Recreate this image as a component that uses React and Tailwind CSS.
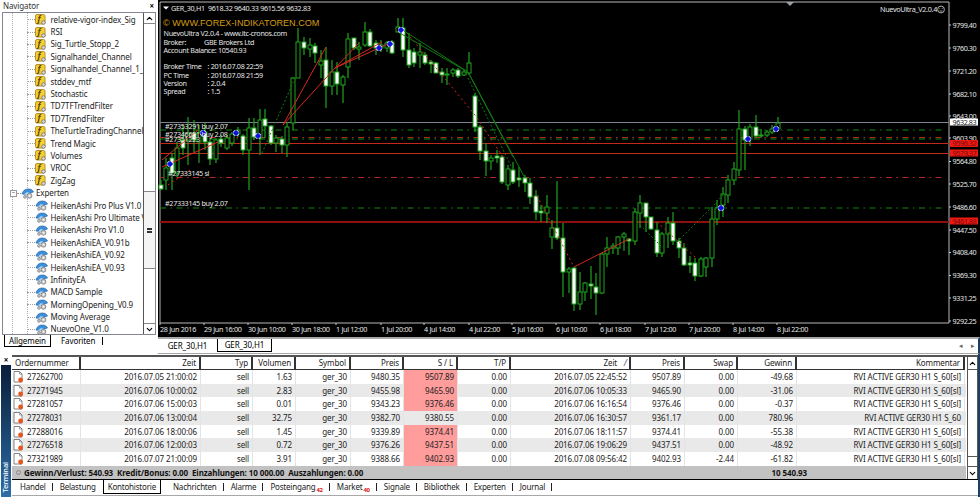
import React from 'react';
import { ChevronUp, ChevronDown } from 'lucide-react';

// x, high, low, bodyTop, bodyBottom, white body?
const candles = [
  [161, 180, 190, 185, 189, 1], [166, 158, 190, 168, 180, 0], [172, 153, 190, 158, 173, 1], [177, 142, 177, 148, 173, 0],
  [183, 125, 155, 140, 148, 1], [188, 117, 165, 133, 140, 0], [194, 120, 152, 133, 140, 1], [199, 125, 163, 133, 142, 0],
  [205, 123, 150, 132, 142, 1], [210, 138, 165, 142, 159, 1], [216, 138, 163, 140, 159, 0], [221, 135, 147, 139, 143, 1],
  [227, 135, 150, 138, 148, 0], [232, 132, 146, 134, 143, 0], [238, 127, 137, 130, 134, 0], [243, 134, 155, 136, 150, 1],
  [249, 118, 190, 128, 150, 0], [254, 118, 140, 128, 137, 1], [260, 109, 155, 120, 138, 0], [265, 109, 138, 119, 126, 1],
  [271, 125, 145, 126, 143, 1], [276, 135, 152, 138, 143, 0], [282, 136, 153, 139, 145, 1], [287, 122, 157, 127, 145, 0],
  [293, 77, 130, 78, 123, 0], [298, 28, 78, 42, 78, 0], [304, 37, 55, 42, 48, 1], [310, 38, 57, 45, 49, 0],
  [315, 43, 63, 46, 53, 1], [321, 50, 78, 61, 65, 0], [326, 47, 108, 60, 86, 1], [332, 60, 95, 72, 86, 0],
  [337, 62, 95, 72, 84, 1], [343, 75, 103, 77, 85, 0], [348, 33, 78, 39, 67, 0], [354, 38, 50, 38, 48, 1],
  [359, 42, 60, 47, 49, 0], [365, 22, 47, 32, 45, 0], [370, 29, 47, 32, 46, 1], [376, 40, 55, 43, 48, 1],
  [381, 40, 52, 45, 48, 0], [387, 41, 52, 43, 48, 0], [392, 40, 54, 42, 53, 1], [398, 18, 32, 27, 32, 0],
  [403, 18, 57, 28, 50, 1], [409, 33, 68, 50, 65, 1], [414, 48, 67, 52, 63, 1], [420, 43, 68, 52, 55, 0],
  [425, 52, 65, 55, 63, 1], [431, 60, 73, 62, 64, 1], [436, 62, 73, 63, 73, 1], [442, 68, 83, 72, 75, 1],
  [447, 68, 85, 74, 75, 1], [453, 68, 77, 70, 73, 0], [458, 68, 78, 70, 76, 1], [464, 70, 76, 72, 75, 0],
  [469, 52, 75, 63, 73, 0], [475, 93, 132, 96, 127, 1], [480, 125, 160, 127, 151, 1], [486, 143, 176, 151, 161, 1],
  [491, 155, 170, 158, 161, 0], [497, 150, 163, 156, 158, 1], [502, 155, 184, 157, 182, 1], [508, 165, 190, 169, 185, 0],
  [513, 162, 184, 170, 182, 1], [519, 167, 187, 178, 180, 1], [525, 175, 192, 178, 183, 1], [530, 178, 204, 183, 197, 1],
  [536, 190, 220, 196, 212, 1], [541, 205, 222, 211, 213, 1], [547, 195, 223, 207, 213, 0], [552, 220, 249, 228, 237, 0],
  [557, 181, 240, 228, 238, 1], [563, 223, 297, 238, 272, 1], [569, 267, 293, 269, 272, 0], [574, 267, 311, 268, 304, 1],
  [580, 272, 310, 292, 304, 0], [585, 282, 301, 283, 292, 0], [591, 266, 299, 284, 286, 1], [596, 273, 315, 287, 293, 1],
  [602, 253, 294, 254, 293, 0], [607, 237, 267, 248, 254, 0], [613, 243, 254, 246, 248, 0], [618, 236, 255, 237, 248, 0],
  [624, 232, 251, 234, 237, 0], [629, 238, 255, 239, 241, 1], [635, 208, 245, 212, 241, 0], [640, 195, 228, 203, 213, 0],
  [646, 203, 232, 203, 217, 1], [651, 217, 230, 217, 229, 1], [657, 222, 257, 230, 253, 1], [662, 232, 257, 234, 253, 0],
  [668, 217, 248, 223, 234, 0], [673, 212, 245, 223, 241, 1], [679, 238, 258, 241, 248, 1], [684, 243, 266, 248, 265, 1],
  [690, 256, 273, 263, 265, 1], [695, 258, 281, 263, 276, 1], [701, 257, 277, 259, 276, 0], [706, 257, 277, 258, 267, 0],
  [712, 207, 267, 219, 258, 0], [717, 200, 225, 208, 219, 0], [723, 187, 217, 194, 205, 0], [728, 175, 203, 180, 195, 0],
  [734, 162, 185, 169, 180, 0], [739, 110, 176, 129, 170, 0], [745, 126, 170, 129, 140, 1], [750, 124, 146, 127, 139, 0],
  [756, 115, 138, 127, 136, 1], [761, 129, 138, 135, 136, 1], [767, 130, 137, 132, 135, 0], [772, 125, 134, 129, 132, 0],
  [778, 117, 131, 123, 129, 0],
];

const diamonds = [[170, 164], [203, 133], [236, 133], [258, 136], [379, 48], [390, 44], [401, 30], [721, 208], [748, 139], [776, 129]];

const dashdot = '6 4.5 1.5 4.5';

const times = [
  [160, '28 Jun 2016'], [204, '29 Jun 16:00'], [248, '30 Jun 10:00'], [292, '30 Jun 18:00'], [336, '1 Jul 12:00'],
  [381, '1 Jul 20:00'], [424, '4 Jul 14:00'], [469, '4 Jul 22:00'], [512, '5 Jul 16:00'], [556, '6 Jul 10:00'],
  [600, '6 Jul 18:00'], [645, '7 Jul 12:00'], [689, '7 Jul 20:00'], [733, '8 Jul 14:00'], [777, '8 Jul 22:00'],
];

const prices = [
  [25, '9799.40'], [48, '9760.30'], [71, '9721.20'], [94, '9682.10'], [116, '9643.00'], [138, '9603.90'], [161.5, '9564.80'],
  [184, '9525.70'], [207, '9486.60'], [230, '9447.50'], [252.5, '9408.40'], [275.5, '9369.30'], [298, '9331.25'], [321, '9292.25'],
];

const info = [
  [35.5, 'NuevoUltra  V2.0.4 - www.itc-cronos.com'],
  [44.5, 'Broker:'],
  [52.5, 'Account Balance: 10540.93'],
  [69, 'Broker Time'],
  [77.5, 'PC Time'],
  [85.5, 'Version'],
  [94, 'Spread'],
];

const infoValues = [
  [44.5, 204, 'GBE Brokers Ltd'],
  [69, 207.5, ': 2016.07.08 22:59'],
  [77.5, 207.5, ': 2016.07.08 21:59'],
  [85.5, 207.5, ': 2.0.4'],
  [94, 207.5, ': 1.5'],
];

const indicators = [
  'relative-vigor-index_Sig', 'RSI', 'Sig_Turtle_Stopp_2', 'Signalhandel_Channel', 'Signalhandel_Channel_1_',
  'stddev_mtf', 'Stochastic', 'TD7TFTrendFilter', 'TD7TrendFilter', 'TheTurtleTradingChannel', 'Trend Magic',
  'Volumes', 'VROC', 'ZigZag',
];

const experts = [
  'HeikenAshi Pro Plus V1.0', 'HeikenAshi Pro Ultimate V', 'HeikenAshi Pro V1.0', 'HeikenAshiEA_V0.91b',
  'HeikenAshiEA_V0.92', 'HeikenAshiEA_V0.93', 'InfinityEA', 'MACD Sample', 'MorningOpening_V0.9',
  'Moving Average', 'NuevoOne_V1.0',
];

const columns = [
  { label: 'Ordernummer', w: 'w-[69px]', align: 'text-left pl-[3px]' },
  { label: 'Zeit', w: 'w-[120px]', align: 'text-right' },
  { label: 'Typ', w: 'w-[52px]', align: 'text-right' },
  { label: 'Volumen', w: 'w-[43px]', align: 'text-right' },
  { label: 'Symbol', w: 'w-[55px]', align: 'text-right' },
  { label: 'Preis', w: 'w-[53px]', align: 'text-right' },
  { label: 'S / L', w: 'w-[54px]', align: 'text-right' },
  { label: 'T/P', w: 'w-[53px]', align: 'text-right' },
  { label: 'Zeit    ⁄', w: 'w-[120px]', align: 'text-right' },
  { label: 'Preis', w: 'w-[54px]', align: 'text-right' },
  { label: 'Swap', w: 'w-[53px]', align: 'text-right' },
  { label: 'Gewinn', w: 'w-[59px]', align: 'text-right' },
  { label: 'Kommentar', w: 'w-[168px]', align: 'text-right' },
];

const rows = [
  ['27262700', '2016.07.05 21:00:02', 'sell', '1.63', 'ger_30', '9480.35', '9507.89', '0.00', '2016.07.05 22:45:52', '9507.89', '0.00', '-49.68', 'RVI ACTIVE GER30 H1 S_60[sl]'],
  ['27271945', '2016.07.06 10:00:02', 'sell', '2.83', 'ger_30', '9455.98', '9465.90', '0.00', '2016.07.06 10:05:33', '9465.90', '0.00', '-31.06', 'RVI ACTIVE GER30 H1 S_60[sl]'],
  ['27281057', '2016.07.06 15:00:03', 'sell', '0.01', 'ger_30', '9343.23', '9376.46', '0.00', '2016.07.06 16:16:54', '9376.46', '0.00', '-0.37', 'RVI ACTIVE GER30 H1 S_60[sl]'],
  ['27278031', '2016.07.06 13:00:04', 'sell', '32.75', 'ger_30', '9382.70', '9380.55', '0.00', '2016.07.06 16:30:57', '9361.17', '0.00', '780.96', 'RVI ACTIVE GER30 H1 S_60'],
  ['27288016', '2016.07.06 18:00:06', 'sell', '1.45', 'ger_30', '9339.89', '9374.41', '0.00', '2016.07.06 18:11:57', '9374.41', '0.00', '-55.38', 'RVI ACTIVE GER30 H1 S_60[sl]'],
  ['27276518', '2016.07.06 12:00:03', 'sell', '0.72', 'ger_30', '9376.26', '9437.51', '0.00', '2016.07.06 19:06:29', '9437.51', '0.00', '-48.92', 'RVI ACTIVE GER30 H1 S_60[sl]'],
  ['27321989', '2016.07.07 21:00:09', 'sell', '3.91', 'ger_30', '9388.66', '9402.93', '0.00', '2016.07.08 09:56:42', '9402.93', '-2.44', '-61.82', 'RVI ACTIVE GER30 H1 S_60[sl]'],
];

const tabs = [
  { label: 'Handel', sep: true }, { label: 'Belastung' }, { label: 'Kontohistorie', active: true }, { label: 'Nachrichten', sep: true },
  { label: 'Alarme', sep: true }, { label: 'Posteingang', badge: '42', sep: true }, { label: 'Market', badge: '40', sep: true }, { label: 'Signale', sep: true },
  { label: 'Bibliothek', sep: true }, { label: 'Experten', sep: true }, { label: 'Journal', sep: true },
];

function IndicatorIcon() {
  return (
    <svg width="11" height="11" viewBox="0 0 11 11" className="shrink-0">
      <rect x="0.5" y="0.5" width="9.5" height="9.5" rx="1.5" fill="#f5d02f" stroke="#b8912a" />
      <text x="2.6" y="8" fontSize="8" fontStyle="italic" fontWeight="700" fill="#5a4410">f</text>
      <circle cx="8.5" cy="8.5" r="1.8" fill="#d8d8d8" stroke="#666" strokeWidth="0.7" />
    </svg>
  );
}

function ExpertIcon() {
  return (
    <svg width="13" height="11" viewBox="0 0 13 11" className="shrink-0">
      <path d="M1 6 C2 2 5 0.8 8 1 C10.5 1.2 12 2.5 12.5 4 L9 5.2 C6 6.4 3 6.6 1 6Z" fill="#3f8fd8" stroke="#1f5f9f" strokeWidth="0.6" />
      <path d="M3 6.2 L6 4 L9.5 5.2 L6 7Z" fill="#a9d3f2" />
      <circle cx="8.5" cy="7.8" r="2.4" fill="#cfcfcf" stroke="#777" strokeWidth="0.8" />
      <circle cx="8.5" cy="7.8" r="0.8" fill="#fff" />
      <circle cx="4" cy="8.8" r="1.5" fill="#bdbdbd" stroke="#777" strokeWidth="0.6" />
    </svg>
  );
}

function OrderIcon() {
  return (
    <svg width="11" height="12" viewBox="0 0 11 12" className="shrink-0">
      <path d="M1 0.5 H6.5 L9 3 V11 H1Z" fill="#fff" stroke="#666" strokeWidth="0.8" />
      <path d="M6.5 0.5 V3 H9" fill="none" stroke="#666" strokeWidth="0.6" />
      <circle cx="7.6" cy="9" r="2.4" fill="#e8541c" />
    </svg>
  );
}

function TreeRow({ label, children }) {
  return (
    <div className="flex h-[12.4px] items-center whitespace-nowrap">
      <div className="w-[24px] shrink-0" />
      <div className="w-[8px] shrink-0 border-t border-dotted border-[#a0a0a0]" />
      <div className="flex w-[15.5px] shrink-0 items-center">{children}</div>
      <span>{label}</span>
    </div>
  );
}

function Navigator() {
  return (
    <div className="flex w-[158px] shrink-0 flex-col">
      <div className="flex h-[12px] items-center justify-between pl-[3px] pr-[4px] text-[#333]">
        <span>Navigator</span>
        <span className="font-bold text-black">×</span>
      </div>
      <div className="mx-[2px] flex h-[323px] border border-[#828790] bg-white">
        <div className="relative min-w-0 flex-1 overflow-hidden pt-[0.5px] text-[#222]">
          <div className="absolute bottom-0 left-[9px] top-0 border-l border-dotted border-[#b0b0b0]" />
          <div className="absolute left-[24px] top-0 h-[175px] border-l border-dotted border-[#b0b0b0]" />
          <div className="absolute left-[24px] top-[185px] bottom-0 border-l border-dotted border-[#b0b0b0]" />
          {indicators.map((n) => (
            <TreeRow key={n} label={n}><IndicatorIcon /></TreeRow>
          ))}
          <div className="flex h-[12.4px] items-center whitespace-nowrap">
            <div className="relative ml-[7px] flex h-[7px] w-[7px] shrink-0 items-center justify-center border border-[#999] bg-white text-[6px] leading-none">−</div>
            <div className="w-[4px] shrink-0 border-t border-dotted border-[#a0a0a0]" />
            <div className="flex w-[15px] shrink-0 items-center"><ExpertIcon /></div>
            <span>Experten</span>
          </div>
          {experts.map((n) => (
            <TreeRow key={n} label={n}><ExpertIcon /></TreeRow>
          ))}
        </div>
        <div className="flex w-[12px] shrink-0 flex-col border-l border-[#555] bg-white">
          <div className="flex h-[11px] items-center justify-center border-b border-[#888]"><ChevronUp size={9} strokeWidth={3} /></div>
          <div className="h-[167px]" />
          <div className="flex h-[78px] items-center justify-center border-y border-[#888] bg-[#f4f4f4]">
            <div className="h-[5px] w-[5px] border-y-2 border-[#333]" />
          </div>
          <div className="flex-1" />
          <div className="flex h-[11px] items-center justify-center border-t border-[#888]"><ChevronDown size={9} strokeWidth={3} /></div>
        </div>
      </div>
      <div className="flex h-[13px] items-start pl-[4px]">
        <div className="flex h-[12px] w-[47px] items-center justify-center border border-t-0 border-black bg-white">Allgemein</div>
        <span className="ml-[10px] leading-[12px]">Favoriten</span>
        <div className="ml-[7px] mt-[2px] h-[8px] border-l border-black" />
      </div>
    </div>
  );
}

function Chart() {
  return (
    <div className="relative h-[337px] overflow-hidden bg-black">
      <svg width="822" height="337" viewBox="158 0 822 337" className="block">
        {/* frame */}
        <path d="M160 2 H949 V323 H160Z" fill="none" stroke="#b8b8b8" strokeWidth="1" />
        <path d="M786 2 H794 L790 6Z" fill="#9aa0a8" />

        {/* levels */}
        <line x1="160" x2="949" y1="122.5" y2="122.5" stroke="#7c8494" />
        <line x1="160" x2="943" y1="130" y2="130" stroke="#128a12" strokeWidth="1.2" strokeDasharray={dashdot} />
        <line x1="160" x2="943" y1="139" y2="139" stroke="#128a12" strokeWidth="1.2" strokeDasharray={dashdot} />
        <line x1="160" x2="943" y1="137.5" y2="137.5" stroke="#b02a1a" strokeWidth="1.2" strokeDasharray={dashdot} />
        <line x1="160" x2="949" y1="143.5" y2="143.5" stroke="#c02a1a" />
        <line x1="160" x2="949" y1="153.5" y2="153.5" stroke="#c02a1a" />
        <line x1="160" x2="943" y1="177.5" y2="177.5" stroke="#b02a1a" strokeDasharray={dashdot} />
        <line x1="160" x2="943" y1="208" y2="208" stroke="#128a12" strokeDasharray={dashdot} />
        <line x1="160" x2="949" y1="222" y2="222" stroke="#8c1010" strokeWidth="2" />

        {/* candles */}
        {candles.map(([x, h, l, t, b, white]) => (
          <g key={x}>
            <line x1={x} x2={x} y1={h} y2={l} stroke="#1fa51f" strokeWidth="1.2" />
            <rect x={x - 2} y={t} width="4" height={Math.max(b - t, 1)} fill={white ? '#ffffff' : '#000000'} stroke="#1fa51f" strokeWidth="1" />
          </g>
        ))}

        {/* trend lines */}
        <g fill="none" strokeWidth="1">
          <path d="M162 167 L218 142 M162 160 L198 130 M283 125 L326 47 M283 125 L335 68 L392 42 M335 68 L359 43 M335 68 L382 42" stroke="#d8281c" />
          <path d="M574 267 L629 239" stroke="#d8281c" />
          <path d="M407 33 L475 115 L505 160 M537 196 L574 267 M657 222 L695 257 M168 185 L190 170" stroke="#d8281c" strokeDasharray="2 3" />
          <path d="M398 32 L468 72 M398 27 L468 72 M468 72 L525 178 M468 72 L513 157" stroke="#127a12" />
          <path d="M262 153 L295 78 M468 78 L512 168 M640 225 L663 248 M677 242 L712 207 L723 195" stroke="#127a12" strokeDasharray="2 2" />
        </g>

        {/* order markers */}
        {diamonds.map(([x, y]) => (
          <g key={`${x}-${y}`}>
            <circle cx={x} cy={y} r="3" fill="#ffffff" />
            <path d={`M${x} ${y - 3.2} L${x + 3.2} ${y} L${x} ${y + 3.2} L${x - 3.2} ${y}Z`} fill="#1010e0" />
          </g>
        ))}

        {/* overlay text */}
        <g fill="#e6e6e6" fontSize="7.2" letterSpacing="-0.3">
          <path d="M163 6.5 H169 L166 9.5Z" fill="#fff" />
          <text x="171" y="10.5">GER_30,H1</text>
          <text x="208" y="10.5">9618.32 9640.33 9615.56 9632.83</text>
          <text x="163" y="25.7" fontSize="9.1" letterSpacing="0" fill="#d49c12" className="font-['Liberation_Sans',sans-serif]">© WWW.FOREX-INDIKATOREN.COM</text>
          {info.map(([y, t]) => <text key={y} x="163.5" y={y}>{t}</text>)}
          {infoValues.map(([y, x, t]) => <text key={y} x={x} y={y}>{t}</text>)}
          <text x="165" y="128.5">#27353291 buy 2.07</text>
          <text x="165" y="136.5">#27346651 buy 2.08</text>
          <text x="165" y="141.5">#27351223</text>
          <text x="168" y="176">#27333145 sl</text>
          <text x="165" y="206">#27333145 buy 2.07</text>
          <text x="880" y="11.5">NuevoUltra_V2.0.4</text>
          <circle cx="941" cy="9.5" r="3.4" fill="none" stroke="#ddd" strokeWidth="0.8" />
          <path d="M939.4 8.6 H940.2 M941.8 8.6 H942.6 M939.6 11 H942.4" stroke="#ddd" strokeWidth="0.7" />
        </g>

        {/* price axis */}
        <g fontSize="7.2" letterSpacing="-0.4" fill="#e6e6e6">
          {prices.map(([y, t]) => (
            <g key={t}>
              <line x1="949" x2="951" y1={y} y2={y} stroke="#ccc" />
              <text x="952.5" y={y + 2.6}>{t}</text>
            </g>
          ))}
          <rect x="950" y="118.5" width="28" height="7" fill="#ffffff" />
          <text x="952.5" y="124.7" fill="#222">9632.83</text>
          <rect x="950" y="140" width="28" height="7" fill="#f01810" />
          <text x="952.5" y="146.2" fill="#701010">9596.32</text>
          <rect x="950" y="149.5" width="28" height="7" fill="#f01810" />
          <text x="952.5" y="155.7" fill="#701010">9579.37</text>
          <rect x="950" y="217.5" width="28" height="7" fill="#f01810" />
          <text x="952.5" y="223.7" fill="#701010">9461.88</text>
        </g>

        {/* time axis */}
        <g fontSize="7.2" letterSpacing="-0.3" fill="#e6e6e6">
          {times.map(([x, t]) => (
            <g key={t}>
              <line x1={x} x2={x} y1="323" y2="325" stroke="#ccc" />
              <text x={x} y="331.5">{t}</text>
            </g>
          ))}
        </g>
      </svg>
    </div>
  );
}

function ChartTabs() {
  return (
    <div className="flex h-[17px] items-start border-y-2 border-b border-y-[#a8a8a8] border-r-2 border-r-[#1c3f63] bg-white">
      <div className="flex h-[13px] w-[59px] items-center justify-center bg-white">GER_30,H1</div>
      <div className="flex h-[13px] w-[55px] items-center justify-center border-x border-b border-black">GER_30,H1</div>
      <div className="ml-auto flex h-[13px] items-center gap-[8px] pr-[3px] text-[7px] text-[#666]">
        <span>◂</span>
        <span>▸</span>
      </div>
    </div>
  );
}

function TradeTable() {
  return (
    <div className="flex min-w-0 flex-1 flex-col">
      <div className="flex h-[124px] border-t-2 border-[#555]">
        <div className="w-[954px] shrink-0">
          <div className="flex h-[13px] bg-white text-[#222]">
            {columns.map((c, i) => (
              <div key={i} className={`${c.w} ${c.align} whitespace-pre border-r-2 border-b border-[#333] pr-[3px] leading-[12px]`}>{c.label}</div>
            ))}
          </div>
          {rows.map((row, r) => (
            <div key={row[0]} className={`flex h-[13.7px] text-[#222] ${r % 2 ? 'bg-[#e9e9e9]' : 'bg-white'}`}>
              {row.map((v, i) => {
                const pink = i === 6 && row[0] !== '27278031';
                return (
                  <div key={i} className={`${columns[i].w} flex items-center whitespace-nowrap border-r border-[#e4e4e4] pr-[3px] ${i === 0 ? 'justify-start gap-[3px] pl-[1px]' : 'justify-end'} ${pink ? 'bg-[#ff9c9c]' : ''}`}>
                    {i === 0 && <OrderIcon />}
                    <span>{v}</span>
                  </div>
                );
              })}
            </div>
          ))}
          <div className="flex h-[14px] items-center bg-[#c2c2c2] font-bold text-[#111]">
            <div className="ml-[4px] mr-[3px] h-[5px] w-[5px] rounded-full border border-[#888]" />
            <span className="w-[722px] whitespace-pre">Gewinn/Verlust: 540.93  Kredit/Bonus: 0.00  Einzahlungen: 10 000.00  Auszahlungen: 0.00</span>
            <span className="w-[61px] text-right">10 540.93</span>
          </div>
        </div>
        <div className="ml-[1px] flex w-[11px] shrink-0 flex-col border-x border-[#555] bg-white">
          <div className="flex h-[13px] items-center justify-center border-b border-[#555]"><ChevronUp size={9} strokeWidth={3} /></div>
          <div className="h-[87px] border-b border-[#555]" />
          <div className="flex-1" />
          <div className="flex h-[13px] items-center justify-center border-t border-[#555]"><ChevronDown size={9} strokeWidth={3} /></div>
        </div>
      </div>
      <div className="flex h-[17px] items-start border-t border-b border-t-black border-b-[#a8a8a8] bg-white pl-[1px] tracking-[-0.2px] text-[#222]">
        {tabs.map((t) => (
          <div key={t.label} className={`relative flex h-[14px] items-center ${t.active ? 'mr-[5px] border-x border-b border-black px-[4px]' : 'px-[7px]'}`}>
            <span>{t.label}</span>
            {t.badge && <span className="ml-[1px] mt-[6px] text-[6px] font-bold leading-none text-[#e01010]">{t.badge}</span>}
            {t.sep && <span className="absolute right-0 top-[3px] h-[8px] border-l border-[#222]" />}
          </div>
        ))}
      </div>
    </div>
  );
}

export default function App() {
  return (
    <div className="flex h-[497px] w-[980px] flex-col overflow-hidden bg-white font-['Noto_Sans',sans-serif] text-[8px] leading-none tracking-[-0.1px]">
      <div className="flex h-[354px] shrink-0">
        <Navigator />
        <div className="flex min-w-0 flex-1 flex-col">
          <Chart />
          <ChartTabs />
        </div>
      </div>
      <div className="flex flex-1 border-r-2 border-[#1c3f63] bg-white pt-[1px]">
        <div className="flex w-[12px] shrink-0 flex-col items-center">
          <span className="h-[10px] text-[8px] font-bold leading-[10px]">×</span>
          <div className="flex w-[10px] flex-1 items-end justify-center bg-gradient-to-b from-[#0a1f3c] to-[#2c6ea8] pb-[4px]">
            <span className="rotate-180 text-[7.5px] font-medium text-white [writing-mode:vertical-rl]">Terminal</span>
          </div>
        </div>
        <TradeTable />
      </div>
    </div>
  );
}
